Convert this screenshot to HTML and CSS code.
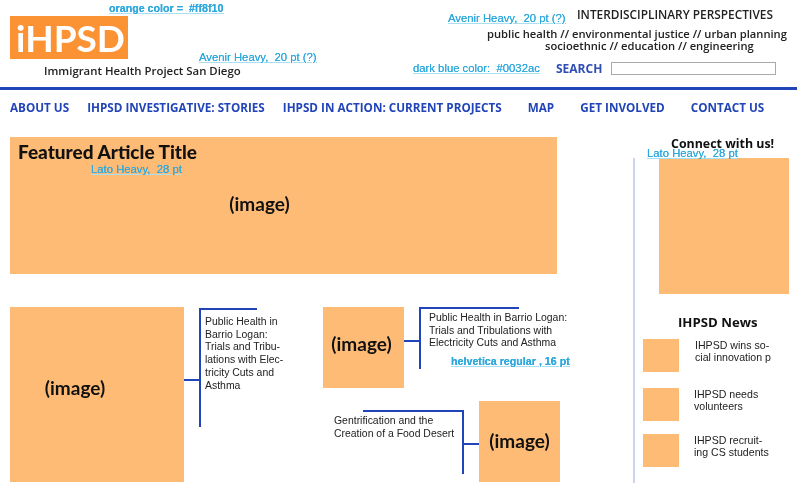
FILE: index.html
```html
<!DOCTYPE html>
<html lang="en">
<head>
  <meta charset="utf-8">
  <title>Immigrant Health Project San Diego</title>
  <link rel="stylesheet" href="styles.css">
</head>
<body>
<div id="page">

  <div id="header">
    <div id="brand">
      <div id="logo">iHPSD</div>
      <div id="tagline">Immigrant Health Project San Diego</div>
    </div>
    <div id="perspectives">
      <div class="persp-title">INTERDISCIPLINARY PERSPECTIVES</div>
      <div class="persp-line first">public health // environmental justice // urban planning</div>
      <div class="persp-line second">socioethnic // education // engineering</div>
      <div id="search">
        <span>SEARCH</span>
        <input type="text" aria-label="Search">
      </div>
    </div>
  </div>

  <div id="nav">
    <a href="#">ABOUT US</a>
    <a href="#">IHPSD INVESTIGATIVE: STORIES</a>
    <a href="#">IHPSD IN ACTION: CURRENT PROJECTS</a>
    <a href="#" class="wide">MAP</a>
    <a href="#" class="wide">GET INVOLVED</a>
    <a href="#" class="wide">CONTACT US</a>
  </div>

  <div id="main">
    <div id="content">
      <div id="featured">
        <h1>Featured Article Title</h1>
        <div class="image-label">(image)</div>
      </div>

      <div id="stories">
        <div class="story story-large">
          <div class="image large">(image)</div>
          <div class="stub"></div>
          <div class="bracket"></div>
          <p>Public Health in<br>Barrio Logan:<br>Trials and Tribu-<br>lations with Elec-<br>tricity Cuts and<br>Asthma</p>
        </div>

        <div id="stories-right">
          <div class="story story-small">
            <div class="image small">(image)</div>
            <div class="stub"></div>
            <div class="bracket"></div>
            <p>Public Health in Barrio Logan:<br>Trials and Tribulations with<br>Electricity Cuts and Asthma</p>
          </div>
          <div class="story story-flip">
            <p>Gentrification and the<br>Creation of a Food Desert</p>
            <div class="bracket"></div>
            <div class="stub"></div>
            <div class="image small">(image)</div>
          </div>
        </div>
      </div>
    </div>

    <div id="sidebar">
      <h2>Connect with us!</h2>
      <div id="connect-image"></div>
      <h3>IHPSD News</h3>
      <div class="news n1"><div class="thumb"></div><p>IHPSD wins so-<br>cial innovation p</p></div>
      <div class="news n2"><div class="thumb"></div><p>IHPSD needs<br>volunteers</p></div>
      <div class="news n3"><div class="thumb"></div><p>IHPSD recruit-<br>ing CS students</p></div>
    </div>
  </div>

  <!-- designer's notes sitting on top of the mockup -->
  <a class="note strong" id="note-orange">orange color =&nbsp; #ff8f10</a>
  <a class="note" id="note-avenir1">Avenir Heavy,&nbsp; 20 pt (?)</a>
  <a class="note" id="note-avenir2">Avenir Heavy,&nbsp; 20 pt (?)</a>
  <a class="note" id="note-blue">dark blue color:&nbsp; #0032ac</a>
  <a class="note" id="note-lato1">Lato Heavy,&nbsp; 28 pt</a>
  <a class="note" id="note-lato2">Lato Heavy,&nbsp; 28 pt</a>
  <a class="note strong" id="note-helvetica">helvetica regular , 16 pt</a>

</div>
</body>
</html>
```

FILE: styles.css
```css
html, body {
  margin: 0;
  padding: 0;
  background: #fff;
}

#page {
  position: relative;
  width: 797px;
  height: 485px;
  overflow: hidden;
  color: #222;
  font-family: "Liberation Sans", Arial, sans-serif;
  filter: blur(0.35px);
}

/* header */
#header {
  display: flex;
  justify-content: space-between;
  height: 87px;
  border-bottom: 3px solid #2145b8;
  box-sizing: content-box;
}

#brand {
  padding: 16px 0 0 10px;
}

#logo {
  box-sizing: border-box;
  width: 118px;
  height: 43px;
  padding-left: 3px;
  background: #fb9334;
  color: #fff;
  font: 700 37px/43px Lato, sans-serif;
  text-align: center;
}

#tagline {
  margin: 5px 0 0 34px;
  font: 600 11.4px/14px "Open Sans", sans-serif;
  white-space: nowrap;
}

#perspectives {
  width: 310px;
  font-family: "Open Sans", sans-serif;
  font-weight: 600;
  white-space: nowrap;
}

.persp-title {
  margin: 7px 0 0 90px;
  font-size: 11.85px;
  line-height: 14px;
}

.persp-line {
  font-size: 11.2px;
  line-height: 12px;
}

.persp-line.first {
  margin: 7px 0 0 0;
}

.persp-line.second {
  margin-left: 58px;
}

#search {
  display: flex;
  align-items: center;
  margin: 8px 0 0 69px;
  color: #2f4db5;
  font-size: 12px;
  font-weight: 700;
}

#search input {
  width: 165px;
  height: 13px;
  margin-left: 9px;
  padding: 0;
  border: 1px solid #aaa;
  box-sizing: border-box;
}

/* nav */
#nav {
  display: flex;
  gap: 18px;
  padding: 9px 0 0 10px;
  height: 38px;
  box-sizing: content-box;
}

#nav a {
  color: #2145b8;
  font: 700 11.7px/17px "Open Sans", sans-serif;
  text-decoration: none;
  white-space: nowrap;
}

#nav a.wide {
  margin-left: 8px;
}

/* main area */
#main {
  display: flex;
}

#content {
  flex: none;
  width: 624px;
  padding-left: 10px;
}

#featured {
  width: 547px;
  height: 137px;
  background: #fdbb75;
  text-align: center;
}

#featured h1 {
  margin: 0;
  padding: 5px 0 0 8px;
  color: #111;
  font: 900 19px/19px Lato, sans-serif;
  text-align: left;
}

.image-label, .image {
  color: #111;
  font: 700 19px/22px Lato, sans-serif;
}

#featured .image-label {
  padding-top: 32px;
  padding-right: 48px;
}

#stories {
  display: flex;
  margin-top: 33px;
}

.story {
  display: flex;
}

.story p {
  margin: 0;
  font-size: 10.45px;
  line-height: 12.7px;
  white-space: nowrap;
}

.image {
  display: flex;
  align-items: center;
  justify-content: center;
  flex: none;
  box-sizing: border-box;
  background: #fdbb75;
}

.image.large {
  width: 174px;
  height: 175px;
  padding: 0 44px 14px 0;
}

.image.small {
  width: 81px;
  height: 81px;
}

.story-small .image.small {
  padding: 0 4px 8px 0;
}

.story-flip .image.small {
  padding: 0 0 2px 0;
}

.stub {
  flex: none;
  height: 2px;
  background: #2145b8;
}

.bracket {
  flex: none;
  box-sizing: border-box;
  border-left: 2px solid #2145b8;
}

.bracket::before {
  content: "";
  display: block;
  height: 2px;
  background: #2145b8;
}

/* first card */
.story-large {
  width: 313px;
}

.story-large .stub {
  width: 15px;
  margin-top: 72px;
}

.story-large .bracket {
  width: 6px;
  height: 119px;
  margin-top: 1px;
}

.story-large .bracket::before {
  width: 56px;
}

.story-large p {
  margin-top: 9px;
}

/* second card */
.story-small .stub {
  width: 15px;
  margin-top: 33px;
}

.story-small .bracket {
  width: 10px;
  height: 62px;
}

.story-small .bracket::before {
  width: 98px;
}

.story-small p {
  margin-top: 5px;
}

/* third card, mirrored */
.story-flip {
  margin: 13px 0 0 11px;
  width: 226px;
}

.story-flip p {
  width: 129px;
  margin-top: 14px;
}

.story-flip .bracket {
  width: 2px;
  height: 64px;
  margin-top: 9px;
  direction: rtl;
}

.story-flip .bracket::before {
  width: 101px;
}

.story-flip .stub {
  width: 15px;
  margin-top: 42px;
}

/* sidebar */
#sidebar {
  position: relative;
  flex: none;
  width: 163px;
  height: 346px;
}

#sidebar::before {
  content: "";
  display: block;
  position: absolute;
  left: -1px;
  top: 21px;
  bottom: 0;
  width: 2px;
  background: #cdd4ee;
}

#sidebar h2 {
  margin: 0;
  padding: 0 0 0 37px;
  color: #111;
  font: 700 12.4px/14px "Open Sans", sans-serif;
  white-space: nowrap;
}

#connect-image {
  width: 130px;
  height: 136px;
  margin: 7px 0 0 25px;
  background: #fdbb75;
}

#sidebar h3 {
  margin: 21px 0 0 44px;
  color: #111;
  font: 700 13.2px/14px "Open Sans", sans-serif;
  white-space: nowrap;
}

.news {
  display: flex;
  margin-left: 9px;
}

.news p {
  margin: 0;
  font-size: 10.6px;
  line-height: 12.4px;
  white-space: nowrap;
}

.thumb {
  flex: none;
  width: 36px;
  height: 33px;
  margin-right: 15px;
  background: #fdbb75;
}

.news.n1 {
  margin-top: 10px;
}

.news.n1 .thumb {
  margin-right: 16px;
}

.news.n2 {
  margin-top: 16px;
}

.news.n3 {
  margin-top: 13px;
}

/* annotations */
.note {
  position: absolute;
  color: #2fa9de;
  font-size: 11.3px;
  line-height: 13px;
  text-decoration: underline;
  text-decoration-color: #a9def3;
  text-shadow: 0 0 0.6px #2fa9de;
  white-space: nowrap;
}

.note.strong {
  font-weight: 700;
  font-size: 10.7px;
}

#note-orange { left: 109px; top: 2px; }
#note-avenir1 { left: 199px; top: 51px; }
#note-avenir2 { left: 448px; top: 12px; }
#note-blue { left: 413px; top: 62px; }
#note-lato1 { left: 91px; top: 163px; }
#note-lato2 { left: 647px; top: 147px; }
#note-helvetica { left: 451px; top: 355px; }
```
